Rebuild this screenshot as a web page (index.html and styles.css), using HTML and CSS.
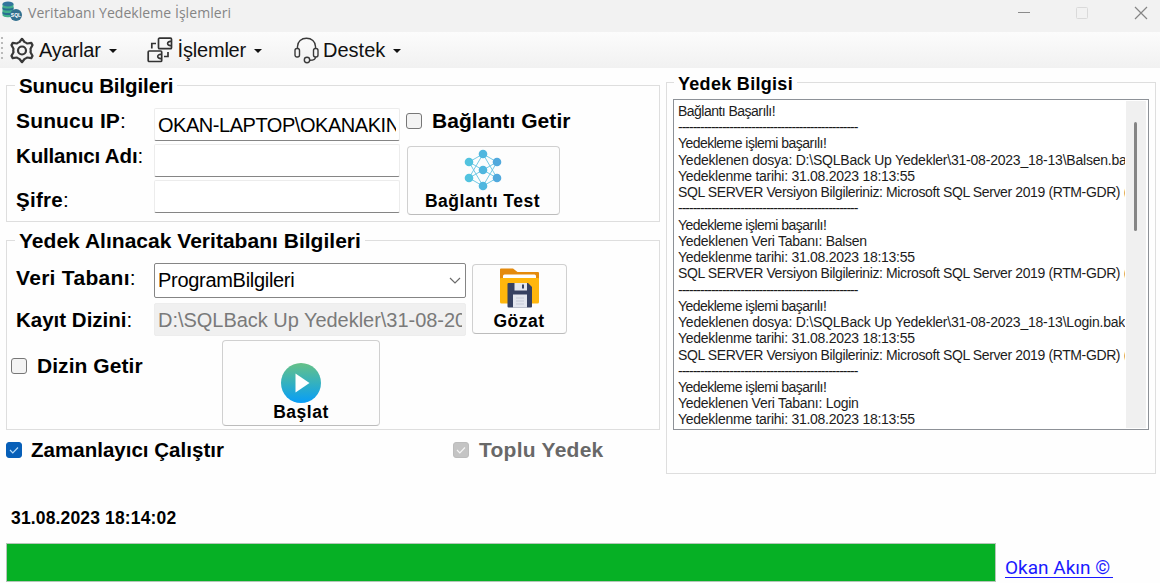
FILE: index.html
```html
<!DOCTYPE html>
<html lang="tr">
<head>
<meta charset="utf-8">
<title>Veritabanı Yedekleme İşlemleri</title>
<link rel="stylesheet" href="styles.css">
</head>
<body>
<header class="titlebar">
  <svg class="app-icon" width="21" height="21" viewBox="0 0 21 21">
    <path d="M0.500 3v11c0 3 11 3 11 0V3z" fill="#43b08b"/>
    <path d="M0.500 6c1 2 10 2 11 0v2c-1 2-10 2-11 0zM0.500 10.500c1 2 10 2 11 0v2c-1 2-10 2-11 0z" fill="#286e91"/>
    <ellipse cx="6" cy="3" rx="5.500" ry="2.500" fill="#32759c"/>
    <circle cx="14" cy="14" r="6" fill="#32708f"/>
    <text x="14" y="16" text-anchor="middle" class="sql-text">SQL</text>
  </svg>
  <span class="title">Veritabanı Yedekleme İşlemleri</span>
  <svg class="window-buttons" width="132" height="14" viewBox="0 0 132 14" fill="none">
    <path d="M0 6.500h12" stroke="#8b8b8b"/>
    <rect x="58.500" y="1.500" width="11" height="11" rx="1" stroke="#dadada"/>
    <path d="M117 1l12 12M129 1l-12 12" stroke="#858585" stroke-width="1.200"/>
  </svg>
</header>

<nav class="menu">
  <span class="grip"></span>
  <div class="menu-item item-settings">
    <svg width="26" height="27" viewBox="0 0 26 27" fill="none" stroke="#383838" stroke-width="2.200" stroke-linejoin="round">
      <path d="M10.500 5L13 1.800 15.500 5c1 .3 1.800.8 2.600 1.500l4.200-.6 1.200 2.200-2 3.600c.3 1.200.3 2.400 0 3.600l2 3.600-1.200 2.200-4.200-.6c-.8.700-1.600 1.200-2.600 1.500L13 25.200 10.500 22c-1-.3-1.800-.8-2.600-1.500l-4.200.6-1.200-2.200 2-3.600c-.3-1.200-.3-2.400 0-3.600l-2-3.600 1.200-2.200 4.200.6C8.700 5.800 9.500 5.300 10.500 5z"/>
      <circle cx="13" cy="13.500" r="4"/>
    </svg>
    <span class="menu-text tight">Ayarlar</span><i class="arrow"></i>
  </div>
  <div class="menu-item item-actions">
    <svg width="27" height="26" viewBox="0 0 27 26" fill="none" stroke="#333" stroke-width="1.700">
      <rect x="11.500" y="1.200" width="13" height="10.500" rx="1"/>
      <path d="M24 4.500c-4.500-.5-4.500 4.500 0 4"/>
      <rect x="1.200" y="14" width="13.500" height="10.500" rx="1"/>
      <path d="M14.500 17.500c-5-.8-5 4.500 0 4M4.800 11.500V6.500H9M17 19.500h4v-4.500"/>
    </svg>
    <span class="menu-text tight">İşlemler</span><i class="arrow"></i>
  </div>
  <div class="menu-item item-support">
    <svg width="25" height="27" viewBox="0 0 25 27" fill="none" stroke="#3a3a3a" stroke-width="1.400">
      <path d="M3.500 12V9.500C3.500 4.500 7.500 1.200 12.500 1.200s9 3.300 9 8.300V12M21.500 20c0 2.500-2.500 3.300-5.500 3.300"/>
      <rect x="1" y="11.500" width="4.500" height="8.500" rx="2"/>
      <rect x="19.500" y="11.500" width="4.500" height="8.500" rx="2"/>
      <circle cx="13" cy="23" r="2.700"/>
    </svg>
    <span class="menu-text">Destek</span><i class="arrow"></i>
  </div>
</nav>

<main class="content">
  <div class="left">
    <fieldset class="group server">
      <legend class="server-legend">Sunucu Bilgileri</legend>
      <div class="labels">
        <label class="l-ip">Sunucu IP<span class="colon">:</span></label>
        <label class="l-user">Kullanıcı Adı<span class="colon">:</span></label>
        <label class="l-pass">Şifre<span class="colon">:</span></label>
      </div>
      <div class="fields">
        <div class="textbox"><span class="value host">OKAN-LAPTOP\OKANAKIN</span></div>
        <div class="textbox"></div>
        <div class="textbox"></div>
      </div>
      <div class="side">
        <label class="check"><i class="box"></i><span>Bağlantı Getir</span></label>
        <div class="button test">
          <svg width="38" height="42" viewBox="0 0 38 42">
            <g stroke="#74cae5" stroke-width="1" fill="none">
              <path d="M5 13L19 5l14 8M5 29l14 8 14-8M19 5L5 29M19 5l14 24M19 37L5 13M19 37l14-24M5 13l14 8 14-8M5 29l14-8 14 8"/>
            </g>
            <circle cx="19" cy="5" r="4.300" fill="#50b7df"/><circle cx="19" cy="21" r="4.300" fill="#50b7df"/><circle cx="19" cy="37" r="4.300" fill="#50b7df"/>
            <circle cx="5" cy="13" r="4.300" fill="#52c3df"/><circle cx="5" cy="29" r="4.300" fill="#52c3df"/>
            <circle cx="33" cy="13" r="4.300" fill="#51a9dd"/><circle cx="33" cy="29" r="4.300" fill="#51a9dd"/>
          </svg>
          <span>Bağlantı Test</span>
        </div>
      </div>
    </fieldset>

    <fieldset class="group database">
      <legend class="db-legend">Yedek Alınacak Veritabanı Bilgileri</legend>
      <div class="db-top">
        <div class="labels">
          <label class="l-db">Veri Tabanı<span class="colon">:</span></label>
          <label class="l-dir">Kayıt Dizini<span class="colon">:</span></label>
        </div>
        <div class="fields wide">
          <div class="combo"><span>ProgramBilgileri</span>
            <svg width="12" height="7" viewBox="0 0 12 7" fill="none" stroke="#6b6b6b" stroke-width="1.200"><path d="M1 1l5 5 5-5"/></svg>
          </div>
          <div class="textbox disabled"><span class="value">D:\SQLBack Up Yedekler\31-08-2023</span></div>
        </div>
        <div class="button browse">
          <svg width="40" height="40" viewBox="0 0 40 40">
            <path d="M1 1.500Q1 .5 2 .5h12l4.500 3.500H39q1 0 1 1V15H1z" fill="#e48a0c"/>
            <rect x="4" y="6.500" width="33" height="7" rx="1.500" fill="#fff"/>
            <path d="M1 11q0-1 1-1h37q1 0 1 1v23q0 1.500-1.500 1.500h-36Q1 35.500 1 34z" fill="#ffb60c"/>
            <path d="M8.500 16q0-1 1-1H29l4 4v19.500q0 1-1 1H9.500q-1 0-1-1z" fill="#364161"/>
            <rect x="15.500" y="15" width="12.500" height="7.500" fill="#e3e6ee"/><rect x="23" y="16.500" width="2" height="4" fill="#364161"/>
            <rect x="14" y="26.500" width="14" height="13" fill="#e3e6ee"/>
            <path d="M17 30h8M17 33h8M17 36h8" stroke="#c5cad7"/>
          </svg>
          <span>Gözat</span>
        </div>
      </div>
      <div class="db-bottom">
        <label class="check"><i class="box"></i><span>Dizin Getir</span></label>
        <div class="button start">
          <svg width="40" height="40" viewBox="0 0 40 40">
            <defs><linearGradient id="play" x1="0" y1="0" x2="0" y2="1"><stop stop-color="#66c187"/><stop offset=".5" stop-color="#34b1bf"/><stop offset="1" stop-color="#079df8"/></linearGradient></defs>
            <circle cx="20" cy="20" r="20" fill="url(#play)"/>
            <path d="M14.500 10.500v19L28.500 20z" fill="#fff"/>
          </svg>
          <span>Başlat</span>
        </div>
      </div>
    </fieldset>

    <div class="options">
      <label class="check"><i class="box checked"><svg width="10" height="8" viewBox="0 0 10 8" fill="none" stroke="#b8dcf8" stroke-width="1.200"><path d="M1 4l2.800 2.800L9 1.500"/></svg></i><span class="timer-text">Zamanlayıcı Çalıştır</span></label>
      <label class="check muted"><i class="box checked"><svg width="10" height="8" viewBox="0 0 10 8" fill="none" stroke="#f4f4f4" stroke-width="1.200"><path d="M1 4l2.800 2.800L9 1.500"/></svg></i><span>Toplu Yedek</span></label>
    </div>
    <div class="clock">31.08.2023 18:14:02</div>
  </div>

  <fieldset class="group info">
    <legend class="info-legend">Yedek Bilgisi</legend>
    <div class="log">
      <div class="lines">
        <p class="short">Bağlantı Başarılı!</p>
        <p class="dash">-------------------------------------------------</p>
        <p class="short">Yedekleme işlemi başarılı!</p>
        <p class="file">Yedeklenen dosya: D:\SQLBack Up Yedekler\31-08-2023_18-13\Balsen.bak</p>
        <p>Yedeklenme tarihi: 31.08.2023 18:13:55</p>
        <p class="version">SQL SERVER Versiyon Bilgileriniz: Microsoft SQL Server 2019 (RTM-GDR) (</p>
        <p class="dash">-------------------------------------------------</p>
        <p class="short">Yedekleme işlemi başarılı!</p>
        <p>Yedeklenen Veri Tabanı: Balsen</p>
        <p>Yedeklenme tarihi: 31.08.2023 18:13:55</p>
        <p class="version">SQL SERVER Versiyon Bilgileriniz: Microsoft SQL Server 2019 (RTM-GDR) (</p>
        <p class="dash">-------------------------------------------------</p>
        <p class="short">Yedekleme işlemi başarılı!</p>
        <p class="file">Yedeklenen dosya: D:\SQLBack Up Yedekler\31-08-2023_18-13\Login.bak</p>
        <p>Yedeklenme tarihi: 31.08.2023 18:13:55</p>
        <p class="version">SQL SERVER Versiyon Bilgileriniz: Microsoft SQL Server 2019 (RTM-GDR) (</p>
        <p class="dash">-------------------------------------------------</p>
        <p class="short">Yedekleme işlemi başarılı!</p>
        <p>Yedeklenen Veri Tabanı: Login</p>
        <p>Yedeklenme tarihi: 31.08.2023 18:13:55</p>
      </div>
      <div class="scrollbar"><i class="thumb"></i></div>
    </div>
  </fieldset>
</main>

<footer class="footer">
  <div class="progress"></div>
  <a class="author">Okan Akın ©</a>
</footer>
</body>
</html>
```

FILE: styles.css
```css
* { box-sizing: border-box; }
body {
  margin: 0;
  width: 1160px;
  height: 583px;
  overflow: hidden;
  background: #fefefe;
  color: #000;
  font: 20px/24px "Liberation Sans", Arial, sans-serif;
  white-space: nowrap;
}
svg { display: block; flex: none; }

/* Title bar and menu */
.titlebar { display: flex; height: 32px; background: #f2f2f2; padding-left: 2px; }
.app-icon { margin-top: 1px; }
.sql-text { font: bold 5px "Liberation Sans", sans-serif; fill: #fff; }
.title { margin-left: 5px; font: 14px/26px "Open Sans", "Noto Sans", sans-serif; letter-spacing: .06px; color: #858585; }
.window-buttons { margin: 6px 10px 0 auto; }
.menu { display: flex; height: 36px; background: linear-gradient(#fcfcfc, #f1f1f1); }
.grip { width: 2px; height: 24px; margin: 5px 0 0 1px; background: repeating-linear-gradient(#bababa 0 2px, transparent 2px 5px); }
.menu-item { display: flex; align-items: center; height: 36px; }
.item-settings { margin-left: 6px; }
.item-settings svg { margin-right: 4px; }
.item-actions { margin-left: 30px; }
.item-actions svg { margin-right: 4px; }
.item-support { margin-left: 32px; }
.item-support svg { margin-right: 4px; }
.menu-text { font-size: 20px; color: #111; }
.tight { letter-spacing: -.2px; }
.arrow { margin: 2px 0 0 8px; border: 4px solid transparent; border-top: 4px solid #111; border-bottom: 0; }

/* Group boxes */
.content { display: flex; gap: 6px; padding: 6px 4px 0 6px; height: 474px; }
.left { width: 654px; }
.group { min-width: 0; margin: 0; padding: 0; border: 1px solid #dedede; }
legend { height: 22px; line-height: 24px; padding: 0 4px; margin-left: 8px; font-weight: bold; }
.server-legend { font-size: 20.500px; letter-spacing: -.1px; }
.db-legend { font-size: 21px; letter-spacing: .02px; }
.server { display: flex; height: 148px; }
.labels { display: flex; flex-direction: column; width: 147px; padding-left: 9px; font-weight: bold; }
.colon { font-weight: normal; }
.l-ip { margin-top: 13px; font-size: 21px; letter-spacing: .15px; }
.l-user { margin-top: 11px; font-size: 20.500px; letter-spacing: -.15px; }
.l-pass { margin-top: 20px; font-size: 20.500px; letter-spacing: .3px; }
.fields { display: flex; flex-direction: column; gap: 3px; width: 246px; padding-top: 12px; }
.textbox { height: 33px; padding: 0 3px; border: 1px solid #ececec; border-bottom: 1px solid #858585; border-radius: 2px; background: #fff; }
.value { display: block; overflow: hidden; line-height: 33px; }
.host { letter-spacing: -.46px; }
.side { padding: 12px 0 0 6px; }
.check { display: flex; align-items: center; height: 26px; gap: 10px; font-weight: bold; font-size: 21px; letter-spacing: .06px; }
.box { width: 16px; height: 16px; flex: none; border: 1px solid #777; border-radius: 3px; background: #f3f3f3; display: grid; place-items: center; }
.button { display: flex; flex-direction: column; align-items: center; border: 1px solid #d0d0d0; border-bottom-color: #bcbcbc; border-radius: 4px; background: #fdfdfd; font: bold 17.500px/20px "Liberation Sans", Arial, sans-serif; letter-spacing: .5px; }
.test { width: 153px; height: 69px; margin: 12px 0 0 1px; padding: 2px 2px 0 0; }

/* Database group */
.database { height: 201px; margin-top: 7px; }
.db-top { display: flex; height: 86px; }
.l-db { margin-top: 15px; font-size: 21px; letter-spacing: .3px; }
.l-dir { margin-top: 18px; font-size: 20.500px; letter-spacing: 0; }
.wide { width: 312px; padding-top: 12px; gap: 5px; }
.combo { display: flex; align-items: center; justify-content: space-between; height: 35px; padding: 0 4px 0 3px; border: 1px solid #858585; border-radius: 2px; background: #fff; letter-spacing: -.3px; }
.combo span { margin-top: -2px; }
.disabled { background: #f0f0f0; border-color: #ededed; color: #7a7a7a; }
.disabled .value { letter-spacing: -.03px; }
.browse { width: 95px; height: 70px; margin: 13px 0 0 6px; padding: 3px 1px 0 0; }
.button.browse span { margin-top: 3px; }
.db-bottom { display: flex; padding-left: 4px; }
.db-bottom .check { width: 211px; margin-top: 16px; }
.start { width: 158px; height: 86px; margin-top: 3px; padding-top: 22px; }
.button.start span { line-height: 18px; }

.options { display: flex; height: 26px; margin-top: 7px; }
.options .check { gap: 9px; }
.timer-text { width: 422px; font-size: 20.500px; letter-spacing: .02px; }
.options .muted { gap: 10px; letter-spacing: .25px; }
.checked { background: #075fb8; border-color: #075fb8; }
.muted { color: #686868; }
.muted .checked { background: #c4c4c4; border-color: #bcbcbc; }
.clock { margin: 45px 0 0 5px; font: bold 17.500px/20px "Liberation Sans", Arial, sans-serif; letter-spacing: .15px; }

/* Log panel */
.info { width: 490px; height: 403px; margin-top: -3px; }
.info-legend { font-size: 18px; letter-spacing: .3px; line-height: 26px; padding: 0 4px; margin-left: 7px; }
.log { display: flex; height: 331px; margin: 6px 6px 0; padding: 1px; border: 1px solid #8d9197; background: #fff; }
.lines { width: 451px; padding: 2px 0 0 3px; overflow: hidden; color: #1c1c1c; font-size: 14px; line-height: 16.240px; letter-spacing: -.27px; }
.lines p { margin: 0; width: 447px; overflow: hidden; }
.lines .short { letter-spacing: -.53px; }
.lines .dash { letter-spacing: -1px; }
.lines .file { letter-spacing: -.22px; }
.lines .version { letter-spacing: -.38px; }
.scrollbar { width: 20px; padding: 21px 0 0 8px; background: #f0f0f0; }
.thumb { display: block; width: 3px; height: 109px; border-radius: 2px; background: #858585; }

/* Footer */
.footer { display: flex; padding: 1px 0 0 6px; }
.progress { width: 990px; height: 39px; border: 1px solid #b5c6b8; background: #06b025; }
.author { margin: 14px 0 0 9px; padding-right: 3px; height: 21px; border-bottom: 1px solid #1a1aff; color: #1a1aff; font: 19px/21px Roboto, sans-serif; }
```
